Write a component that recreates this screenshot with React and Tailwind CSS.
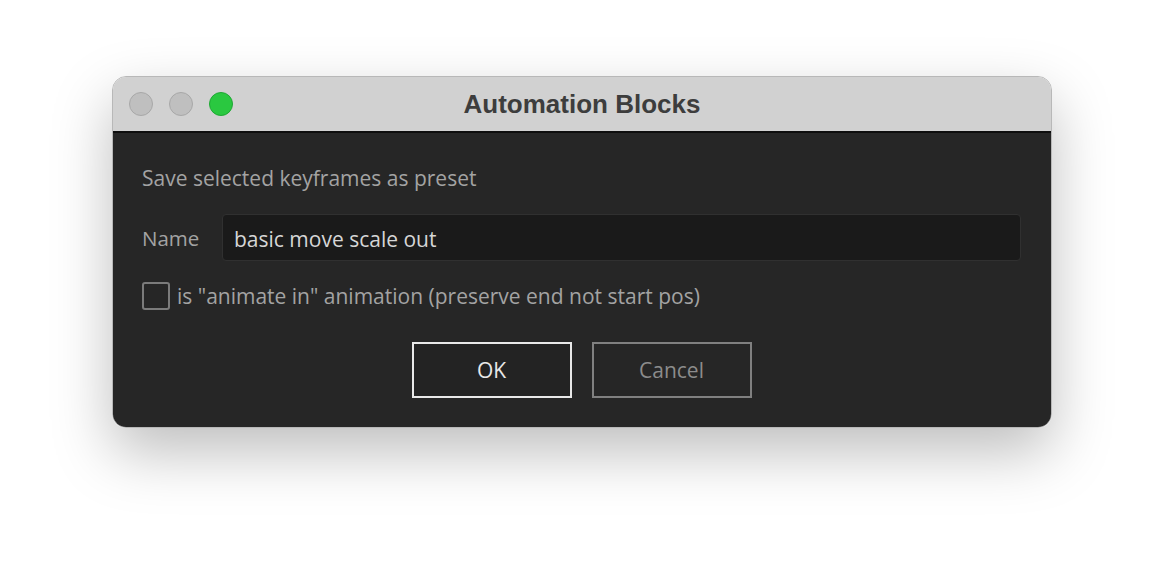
export default function App() {
  return (
    <div
      className="w-[1164px] h-[576px] bg-white pt-[76px] pl-[112px]"
      style={{ fontFamily: '"Open Sans", "Noto Sans", sans-serif' }}
    >
      <div className="w-[940px] h-[352px] rounded-[14px] overflow-hidden flex flex-col border border-[#b8b8b8] shadow-[0_24px_60px_rgba(0,0,0,0.26)]">
        {/* title bar */}
        <div className="relative h-[56px] shrink-0 bg-[#d1d1d1] border-b-2 border-[#0e0e0e] flex items-center">
          <div className="flex items-center gap-4 pl-4">
            <span className="w-6 h-6 rounded-full bg-[#bfbfbf] border border-[#a8a8a8]" />
            <span className="w-6 h-6 rounded-full bg-[#bfbfbf] border border-[#a8a8a8]" />
            <span className="w-6 h-6 rounded-full bg-[#2ac840] border border-[#1fa834]" />
          </div>
          <div
            className="absolute inset-0 flex items-center justify-center text-[26px] font-bold text-[#3d3d3d]"
            style={{ fontFamily: '"Liberation Sans", Arial, sans-serif' }}
          >
            Automation Blocks
          </div>
        </div>

        {/* body */}
        <div className="flex-1 bg-[#262626] px-[29px] pt-[31px]">
          <p className="text-[21px] leading-[28px] text-[#a3a3a3]">
            Save selected keyframes as preset
          </p>

          <div className="flex items-center mt-[22px]">
            <span className="w-[80px] pt-[2px] text-[20.5px] text-[#a3a3a3]">Name</span>
            <div className="w-[799px] h-[47px] bg-[#1a1a1a] border border-[#303030] rounded-[4px] flex items-center px-[11px] pt-[4px] text-[21px] text-[#d6d6d6]">
              basic move scale out
            </div>
          </div>

          <label className="flex items-center gap-[7px] mt-[21px]">
            <span className="w-[28px] h-[28px] rounded-[3px] border-2 border-[#7b7b7b]" />
            <span className="text-[21px] leading-[28px] text-[#a3a3a3]">
              is "animate in" animation (preserve end not start pos)
            </span>
          </label>

          <div className="flex justify-center gap-5 mt-[32px] pr-[1px]">
            <button className="w-[160px] h-[56px] pt-[2px] bg-[#232323] border-2 border-[#e8e8e8] text-[21px] text-[#e8e8e8]">
              OK
            </button>
            <button className="w-[160px] h-[56px] pt-[2px] bg-[#262626] border-2 border-[#808080] text-[21px] text-[#8c8c8c]">
              Cancel
            </button>
          </div>
        </div>
      </div>
    </div>
  );
}
